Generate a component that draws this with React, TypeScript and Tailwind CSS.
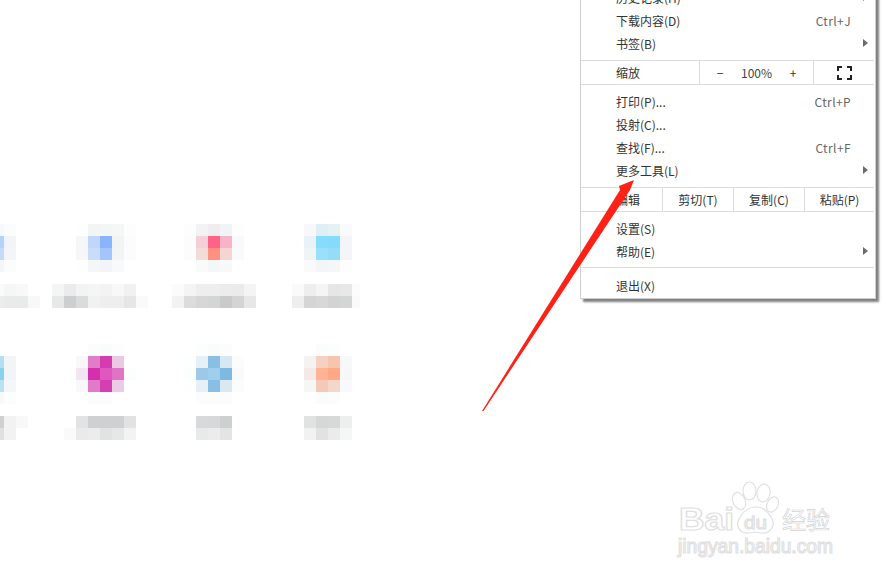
// blurred tile grid: each run is [x, y, ...colours], cells are 12px squares
const MOSAIC: [number, number, string[]][] = [
  // row 1, tile 1 (cut by the left edge)
  [-8, 224, ["#f8f9fa", "#fbfcfc"]],
  [-8, 236, ["#b5d2fb", "#f2f4f7"]],
  [-8, 248, ["#c4dafc", "#f3f5f8"]],
  [-8, 260, ["#f5f6f7", "#fbfcfc"]],
  [-8, 284, ["#fafafa", "#f6f6f6", "#f8f8f8"]],
  [-8, 296, ["#ececec", "#e9eaea", "#e9eaea", "#f7f8f8"]],
  // row 1, tile 2
  [76, 224, ["#fdfefe", "#f3f4f4", "#f4f5f5", "#f5f6f6", "#fdfdfd"]],
  [76, 236, ["#f5f6f8", "#c0d7fb", "#88b5fd", "#f2f3f5", "#fcfcfc"]],
  [76, 248, ["#f6f7f9", "#c9ddfb", "#a3c5fc", "#f3f4f6", "#fcfcfc"]],
  [76, 260, ["#fdfefe", "#f5f6f6", "#f3f4f6", "#f8f9fa"]],
  [52, 284, ["#f5f5f5", "#ebebeb", "#f3f3f3", "#f4f5f5", "#f3f3f3", "#f8f8f8", "#f1f1f1"]],
  [52, 296, ["#e7e8e8", "#cdcecf", "#dadbdb", "#f0f1f1", "#eeeeee", "#eeeeee", "#e5e6e6", "#fafafa"]],
  // row 1, tile 3
  [184, 224, ["#fdfdfd", "#f3f3f5", "#f0ecf0", "#eff4f6", "#fdfdfd"]],
  [184, 236, ["#fbfcfc", "#f4cfd8", "#ff6486", "#f7b4c8", "#f8f9fb"]],
  [184, 248, ["#fcfcfc", "#f3dcd8", "#ff9180", "#f5d5d4", "#f9fafb"]],
  [196, 260, ["#f9fafa", "#f5f6f7", "#f7f8f8"]],
  [172, 284, ["#fbfbfb", "#f3f4f4", "#eeeeee", "#eeeeee", "#ececec", "#ebebeb", "#f4f4f4"]],
  [172, 296, ["#f2f2f2", "#dcdcdc", "#d7d7d7", "#d4d5d5", "#c9caca", "#d4d4d4", "#e7e7e7"]],
  // row 1, tile 4
  [304, 224, ["#f6f8f9", "#e0eff6", "#e6f1f5", "#f9fbfa"]],
  [304, 236, ["#e9f2f6", "#86dcfd", "#84dcfc", "#f3f5f8"]],
  [304, 248, ["#eff4f5", "#98e0fb", "#94dcf8", "#f4f5f8"]],
  [304, 260, ["#fafafa", "#f4f5f7", "#f5f6f7", "#fcfdfd"]],
  [292, 284, ["#fafafa", "#eeeeee", "#f5f5f5", "#e6e6e6", "#e8e8e8", "#fcfcfc"]],
  [292, 296, ["#eeeeee", "#d5d5d5", "#d8d8d8", "#d2d3d3", "#d4d5d5", "#fafafa"]],
  // row 2, tile 1 (cut by the left edge)
  [-8, 356, ["#b4dff0", "#f2f4f6"]],
  [-8, 368, ["#88d1ef", "#f2f4f7"]],
  [-8, 380, ["#b9e2f1", "#f5f6f9"]],
  [-8, 392, ["#f8fafa", "#fcfdfd"]],
  [-8, 416, ["#d0d0d0", "#f2f2f2", "#f8f8f8"]],
  [-8, 428, ["#e0e0e0", "#f2f2f2"]],
  // row 2, tile 2
  [88, 344, ["#fbfcfc", "#fafbfb", "#fdfdfd"]],
  [76, 356, ["#f8f8fb", "#e17cc8", "#d53cb0", "#ebc9e3"]],
  [76, 368, ["#f1e6f2", "#d52fab", "#df57bf", "#df74c6", "#fcfdfd"]],
  [76, 380, ["#f8f8fb", "#e07bc7", "#d63fb2", "#ebcbe3"]],
  [88, 392, ["#fbfcfc", "#fbfcfc"]],
  [76, 416, ["#e2e3e3", "#cfd0d1", "#cfd0d1", "#cfd0d1", "#e2e2e2"]],
  [64, 428, ["#fafafa", "#e9eaea", "#ececec", "#e1e2e2", "#e6e7e7", "#f3f3f3"]],
  // row 2, tile 3
  [196, 344, ["#fcfdfd", "#fafbfb", "#fcfcfc"]],
  [184, 356, ["#fdfefe", "#e6f0f5", "#88bfe4", "#d8e8f2", "#fbfcfc"]],
  [184, 368, ["#fcfdfd", "#9ec8e8", "#9fcfec", "#7cbae4", "#f9fbfb"]],
  [184, 380, ["#fdfefe", "#e7f0f7", "#88bfe4", "#d9e8f1", "#fbfcfc"]],
  [196, 392, ["#fcfcfc", "#fcfcfc", "#fcfcfc"]],
  [196, 416, ["#d8d9da", "#d7d8d9", "#ced0d0"]],
  [196, 428, ["#e8e9e9", "#ececec", "#e3e4e4"]],
  // row 2, tile 4
  [316, 344, ["#fbfcfc", "#fcfdfd"]],
  [304, 356, ["#f5f3f2", "#f6d0c1", "#f7c4ae", "#f7f8fa"]],
  [304, 368, ["#f5e9e8", "#ffb394", "#ffa886", "#f6f7f9"]],
  [304, 380, ["#f5f6f6", "#f5c9b8", "#f3d7ca", "#f8f9fb"]],
  [316, 392, ["#fafbfc", "#fbfcfc"]],
  [304, 416, ["#e1e2e2", "#d6d7d7", "#d7d8d8", "#eeeeee"]],
  [304, 428, ["#f2f2f2", "#e1e2e2", "#ebebeb", "#f5f6f6"]],
]

function Mosaic() {
  return (
    <svg className="absolute left-0 top-0" width={360} height={450} shapeRendering="crispEdges">
      {MOSAIC.flatMap(([x, y, cells]) =>
        cells.map((fill, i) => <rect key={`${x}-${y}-${i}`} x={x + i * 12} y={y} width={12} height={12} fill={fill} />),
      )}
    </svg>
  )
}

function Separator() {
  return <div className="h-px bg-[#dcdce0]" />
}

function Caret() {
  return (
    <svg width={5} height={8} viewBox="0 0 5 8" className="absolute left-[282px] top-[7px]">
      <path d="M0 0L5 4L0 8Z" fill="#6b6b6b" />
    </svg>
  )
}

function MenuItem({ label, shortcut, submenu }: { label: string; shortcut?: string; submenu?: boolean }) {
  return (
    <div className="relative flex h-[23px] items-center justify-between pl-[35px] pr-[23px]">
      <span>{label}</span>
      {shortcut && <span className="tracking-[0.4px] text-[#666]">{shortcut}</span>}
      {submenu && <Caret />}
    </div>
  )
}

function ZoomRow() {
  return (
    <div className="flex h-[23px] items-center">
      <div className="w-[118px] pl-[35px]">缩放</div>
      <div className="flex h-full w-[115px] items-center justify-between border-x border-[#dcdce0] px-[16px]">
        <span className="w-[8px] text-center">−</span>
        <span className="text-[#444]">100%</span>
        <span className="w-[8px] text-center">+</span>
      </div>
      <div className="flex flex-1 justify-center">
        <svg width={15} height={14} viewBox="0 0 15 14" fill="none" stroke="#222" strokeWidth={2}>
          <path d="M1 5V1H5M10 1H14V5M14 9V13H10M5 13H1V9" />
        </svg>
      </div>
    </div>
  )
}

function EditRow() {
  return (
    <div className="flex h-[23px] items-center">
      <div className="w-[81px] pl-[35px]">编辑</div>
      <div className="flex h-full w-[71px] items-center justify-center border-l border-[#dcdce0]">剪切(T)</div>
      <div className="flex h-full w-[71px] items-center justify-center border-l border-[#dcdce0]">复制(C)</div>
      <div className="flex h-full flex-1 items-center justify-center border-l border-[#dcdce0]">粘贴(P)</div>
    </div>
  )
}

function ChromeMenu() {
  return (
    <div className="absolute left-[580px] top-[-15px] w-[296px] border border-[#cfcfcf] bg-white pb-px pr-px text-[12px] leading-none text-[#333] shadow-[3px_3px_2px_rgba(0,0,0,0.5)]">
      <MenuItem label="历史记录(H)" submenu />
      <MenuItem label="下载内容(D)" shortcut="Ctrl+J" />
      <MenuItem label="书签(B)" submenu />
      <div className="h-[5px]" />
      <Separator />
      <ZoomRow />
      <Separator />
      <div className="h-[5px]" />
      <MenuItem label="打印(P)..." shortcut="Ctrl+P" />
      <MenuItem label="投射(C)..." />
      <MenuItem label="查找(F)..." shortcut="Ctrl+F" />
      <MenuItem label="更多工具(L)" submenu />
      <div className="h-[5px]" />
      <Separator />
      <EditRow />
      <Separator />
      <div className="h-[5px]" />
      <MenuItem label="设置(S)" />
      <MenuItem label="帮助(E)" submenu />
      <div className="h-[4px]" />
      <Separator />
      <div className="h-[6px]" />
      <MenuItem label="退出(X)" />
    </div>
  )
}

function RedArrow() {
  return (
    <svg className="absolute left-[470px] top-[170px]" width={180} height={250}>
      <path d="M164 10L160 20L13.500 241L12 241L150 20L149 16Z" fill="#ff2116" />
    </svg>
  )
}

function Watermark() {
  return (
    <svg className="absolute left-[670px] top-[475px]" width={180} height={90} fill="#fff" stroke="#e0e0e0" strokeWidth={1.2}>
      <ellipse cx={69} cy={26} rx={6} ry={9} transform="rotate(-25 69 26)" />
      <ellipse cx={79.500} cy={16} rx={6.500} ry={9} />
      <ellipse cx={93.500} cy={18} rx={6.500} ry={9} transform="rotate(10 93.500 18)" />
      <ellipse cx={102.500} cy={29.500} rx={5.500} ry={8} transform="rotate(25 102.500 29.500)" />
      <path d="M86 32C94 32 99 38 102 44C106 52 99 59 91 58C87 57 83 57 79 58C71 59 65 52 69 44C72 38 78 32 86 32Z" />
      <text x={9} y={55} fontFamily="Liberation Sans" fontWeight={700} fontSize={31} textLength={55} lengthAdjust="spacingAndGlyphs">Bai</text>
      <text x={74} y={54} fontFamily="Liberation Sans" fontSize={19} textLength={23} lengthAdjust="spacingAndGlyphs">du</text>
      <text x={112} y={54} fontFamily="Noto Sans CJK SC" fontSize={24} strokeWidth={0.7} stroke="#d4d4d4">经验</text>
      <text x={8} y={78} fontFamily="Liberation Sans" fontSize={20} textLength={155} lengthAdjust="spacingAndGlyphs">jingyan.baidu.com</text>
    </svg>
  )
}

export default function App() {
  return (
    <div className="relative h-[577px] w-[883px] overflow-hidden bg-white font-['Noto_Sans_CJK_SC','Liberation_Sans',sans-serif]">
      <Mosaic />
      <ChromeMenu />
      <RedArrow />
      <Watermark />
    </div>
  )
}
